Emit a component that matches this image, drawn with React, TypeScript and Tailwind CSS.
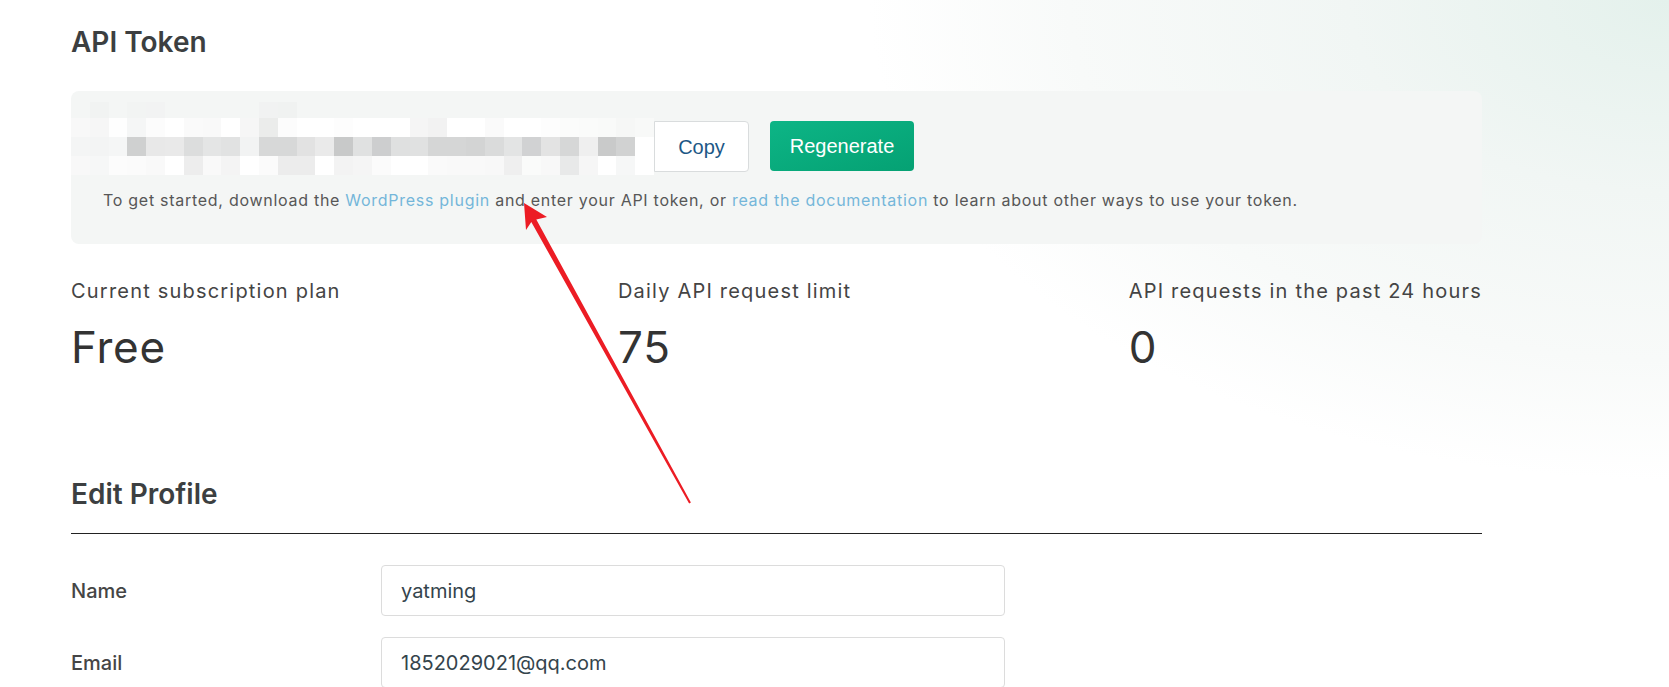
import React from 'react';

// pixelated token (obfuscated in the screenshot)
const mosaic: string[][] = [
  ['', '#f1f3f2', '', '#f2f4f3', '#f2f3f3', '', '', '', '', '', '#f1f2f2', '#f0f2f1', '', '', '', '', '', '', '', '', '', '', '', '', '', '', '', '', '', '', ''],
  ['#f8f8f8', '#f6f6f6', '#fefefe', '#f5f6f6', '#fcfcfc', '#ffffff', '#fafafa', '#f9f9f9', '#ffffff', '#f6f6f6', '#ebeceb', '#fcfcfc', '#ffffff', '#ffffff', '#fdfdfd', '#ffffff', '#ffffff', '#ffffff', '#f5f5f5', '#f2f2f2', '#ffffff', '#ffffff', '#fafafa', '#ffffff', '#ffffff', '#fdfdfd', '#fbfcfb', '#fafbfa', '#f9faf9', '#f6f7f6', '#f8f9f8'],
  ['#f4f5f5', '#f3f4f4', '#f5f6f6', '#cfd0d0', '#e8e8e8', '#e9e9e9', '#dcdddd', '#e4e5e5', '#e1e2e2', '#f2f3f3', '#d7d8d8', '#d7d8d8', '#e2e2e2', '#eaeaea', '#c8c9c9', '#e0e1e1', '#cdcecf', '#dfe0e0', '#e0e1e1', '#d5d6d6', '#d5d6d6', '#d3d4d4', '#dadbdb', '#e3e4e4', '#d1d2d3', '#e3e3e3', '#d6d7d7', '#efefef', '#c9caca', '#d1d2d2', '#ffffff'],
  ['#f8f8f8', '#f6f7f7', '#fcfcfc', '#fbfbfb', '#f9f9f9', '#ffffff', '#ededed', '#f9f9f9', '#f4f4f4', '#ffffff', '#fbfbfb', '#ececec', '#ececec', '#ffffff', '#f3f3f3', '#f5f5f5', '#fbfbfb', '#ffffff', '#ffffff', '#fafafa', '#f9f9f9', '#f9f9f9', '#f8f8f8', '#efefef', '#fafbfa', '#f8f8f8', '#e8e9e9', '#f6f6f6', '#ffffff', '#f6f7f7', '#ffffff'],
];

const stats = [
  { label: 'Current subscription plan', value: 'Free' },
  { label: 'Daily API request limit', value: '75' },
  { label: 'API requests in the past 24 hours', value: '0' },
];

function Field({ label, value }: { label: string; value: string }) {
  return (
    <div className="flex items-center">
      <label className="w-[310px] text-[20px] leading-[28px] font-medium text-[#454545]">
        {label}
      </label>
      <input
        readOnly
        value={value}
        className="w-[624px] h-[51px] rounded-[4px] border border-[#dcdcdc] bg-white px-[19px] text-[20px] text-[#34444c] font-[Inter,sans-serif] outline-none"
      />
    </div>
  );
}

export default function App() {
  return (
    <div className="relative min-h-[687px] w-full overflow-hidden font-[Inter,sans-serif] bg-[radial-gradient(ellipse_800px_480px_at_100%_0%,#e4f1ec_0%,#f1f6f4_40%,#f8faf9_75%,#ffffff_100%)]">
      <div className="pl-[71px] pt-[24.5px]">
        <div className="w-[1411px]">
          <h2 className="text-[28px] leading-[34px] font-semibold text-[#3c3f41]">
            API Token
          </h2>

          <div className="mt-[32px] rounded-lg bg-[#f4f6f5] pt-[11px] pb-[31.5px]">
            <div className="flex items-start">
              <div className="grid w-[583px] grid-cols-[repeat(31,minmax(0,1fr))] grid-rows-[16px_19px_19px_19px]">
                {mosaic.map((row, r) =>
                  row.map((c, i) => (
                    <div key={`${r}-${i}`} style={{ backgroundColor: c || 'transparent' }} />
                  ))
                )}
              </div>
              <button className="mt-[19.5px] h-[51px] w-[95px] rounded-r-[4px] border border-[#d9dcdd] bg-white text-[20px] text-[#1d5886] font-['Liberation_Sans',Arial,sans-serif]">
                Copy
              </button>
              <button className="ml-[21px] mt-[19.5px] h-[50px] w-[144px] rounded-[4px] bg-gradient-to-br from-[#0db586] to-[#05a173] text-[20px] text-white font-['Liberation_Sans',Arial,sans-serif]">
                Regenerate
              </button>
            </div>
            <p className="mt-[13.5px] px-[32px] text-[16px] leading-6 tracking-[0.72px] text-[#575757]">
              To get started, download the{' '}
              <a className="text-[#74b6da]">WordPress plugin</a> and enter your API token, or{' '}
              <a className="text-[#74b6da]">read the documentation</a> to learn about other ways
              to use your token.
            </p>
          </div>

          <div className="mt-[33px] flex justify-between">
            {stats.map((s) => (
              <div key={s.label}>
                <div className="text-[20px] leading-[28px] tracking-[1.2px] text-[#444]">{s.label}</div>
                <div className="mt-[16px] text-[44px] leading-[53px] tracking-[0.8px] text-[#333]">{s.value}</div>
              </div>
            ))}
          </div>

          <h2 className="mt-[103.5px] text-[28px] leading-[34px] font-semibold text-[#3c3f41]">
            Edit Profile
          </h2>
          <div className="mt-[22px] border-t border-[#222]" />

          <div className="mt-[31px] flex flex-col gap-[21px]">
            <Field label="Name" value="yatming" />
            <Field label="Email" value="1852029021@qq.com" />
          </div>
        </div>
      </div>

      {/* red annotation arrow */}
      <svg
        className="pointer-events-none absolute inset-0"
        width="1669"
        height="687"
        viewBox="0 0 1669 687"
      >
        <polygon
          points="524,203 547,217 536.3,219.5 690.9,502.5 689.1,503.5 531.3,222 526,230"
          fill="#ec1c24"
        />
      </svg>
    </div>
  );
}
